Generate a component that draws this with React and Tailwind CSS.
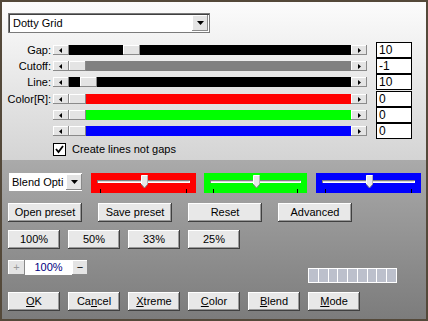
import React from "react";

const font = { fontFamily: '"Liberation Sans", Arial, sans-serif' };

function Tri({ dir }) {
  return (
    <svg width="4" height="5" viewBox="0 0 4 5" className="block">
      {dir === "left" ? <polygon points="3,0 3,5 0,2.5" fill="#000" /> : <polygon points="1,0 1,5 4,2.5" fill="#000" />}
    </svg>
  );
}

function SmallBtn({ children, className = "" }) {
  return (
    <div className={"flex items-center justify-center bg-[#e4e4e4] shadow-[inset_-1px_-1px_#8a8a8a,inset_1px_1px_#ffffff] " + className}>
      {children}
    </div>
  );
}

function ScrollBar({ trackClass, thumb }) {
  return (
    <div className="flex h-[10px] w-[314px]">
      <SmallBtn className="w-[16px] h-full"><Tri dir="left" /></SmallBtn>
      <div className={"relative flex-1 " + trackClass}>
        <div className="absolute top-0 h-full w-[17px] bg-[#e4e4e4] shadow-[inset_-1px_-1px_#8a8a8a,inset_1px_1px_#ffffff]" style={{ left: thumb }} />
      </div>
      <SmallBtn className="w-[16px] h-full"><Tri dir="right" /></SmallBtn>
    </div>
  );
}

function Row({ label, trackClass, thumb, value, extra = "" }) {
  return (
    <div className={"flex h-[16px] items-center " + extra}>
      <div className="w-[49px] text-right text-[11px] leading-none text-black">{label}</div>
      <div className="ml-[2px]">
        <ScrollBar trackClass={trackClass} thumb={thumb} />
      </div>
      <div className="ml-[9px] flex h-[16px] w-[36px] items-center border border-black bg-white pl-[2px] text-[12px] leading-none text-black">
        {value}
      </div>
    </div>
  );
}

function Btn({ children, w = "w-[52px]" }) {
  return (
    <div className={"flex h-[19px] items-center justify-center bg-[#e8e8e8] text-[11px] leading-none text-black shadow-[inset_-1px_-1px_#404040,inset_1px_1px_#ffffff,inset_-2px_-2px_#9a9a9a] " + w}>
      {children}
    </div>
  );
}

function ColorSlider({ bg, w }) {
  return (
    <div className={"relative h-[20px] " + bg + " " + w}>
      <div className="absolute left-[6px] right-[6px] top-[7px] h-[3px] bg-[#d8d8d8] shadow-[inset_1px_1px_#808080,inset_-1px_-1px_#ffffff]" />
      <div className="absolute left-1/2 top-[2px] -ml-[3px] w-[7px]">
        <svg width="7" height="13" viewBox="0 0 7 13" className="block">
          <polygon points="0,0 7,0 7,9 3.5,13 0,9" fill="#e8e8e8" stroke="#808080" strokeWidth="1" />
          <polyline points="0.5,9 0.5,0.5 6.5,0.5" fill="none" stroke="#ffffff" strokeWidth="1" />
        </svg>
      </div>
      <div className="absolute left-[9px] bottom-0 h-[4px] w-px bg-black" />
      <div className="absolute right-[9px] bottom-0 h-[4px] w-px bg-black" />
    </div>
  );
}

export default function App() {
  return (
    <div style={font} className="h-[321px] w-[428px] overflow-hidden border-2 border-[#54493a] select-none">
      {/* top panel */}
      <div className="flex h-[158px] flex-col bg-gradient-to-b from-[#fcfcfc] to-[#d4d4d4]">
        <div className="ml-[6px] mt-[11px] flex h-[20px] w-[202px] items-center border border-[#7a7a7a] bg-white shadow-[inset_1px_1px_#404040]">
          <div className="flex-1 pl-[4px] text-[11px] leading-none text-black">Dotty Grid</div>
          <SmallBtn className="mr-[1px] h-[16px] w-[16px]">
            <svg width="7" height="4" viewBox="0 0 7 4"><polygon points="0,0 7,0 3.5,4" fill="#000" /></svg>
          </SmallBtn>
        </div>
        <div className="mt-[9px] flex flex-col">
          <Row label="Gap:" trackClass="bg-black" thumb={54} value="10" />
          <Row label="Cutoff:" trackClass="bg-[#808080]" thumb={0} value="-1" />
          <Row label="Line:" trackClass="bg-black" thumb={11} value="10" />
          <Row label="Color[R]:" trackClass="bg-[#ff0000]" thumb={0} value="0" extra="mt-px" />
          <Row label="" trackClass="bg-[#00ff00]" thumb={0} value="0" />
          <Row label="" trackClass="bg-[#0000ff]" thumb={0} value="0" />
        </div>
        <div className="ml-[51px] mt-[4px] flex items-center">
          <div className="flex h-[13px] w-[13px] items-center justify-center border border-black bg-white">
            <svg width="9" height="9" viewBox="0 0 9 9"><polyline points="1,4 3.5,7 8,1" fill="none" stroke="#000" strokeWidth="1.8" /></svg>
          </div>
          <span className="ml-[6px] text-[11px] leading-none text-black">Create lines not gaps</span>
        </div>
      </div>
      {/* bottom panel */}
      <div className="flex h-[159px] flex-col bg-gradient-to-b from-[#aaaaaa] to-[#7c7c7c] pl-[6px]">
        <div className="mt-[13px] flex items-start">
          <div className="ml-[1px] flex h-[18px] w-[73px] items-center bg-white">
            <div className="flex-1 overflow-hidden whitespace-nowrap pl-[3px] text-[11px] leading-none text-black">Blend Opti</div>
            <SmallBtn className="h-[16px] w-[16px]">
              <svg width="7" height="4" viewBox="0 0 7 4"><polygon points="0,0 7,0 3.5,4" fill="#000" /></svg>
            </SmallBtn>
          </div>
          <div className="ml-[9px]"><ColorSlider bg="bg-[#ff0000]" w="w-[105px]" /></div>
          <div className="ml-[8px]"><ColorSlider bg="bg-[#00ff00]" w="w-[103px]" /></div>
          <div className="ml-[9px]"><ColorSlider bg="bg-[#0000ff]" w="w-[105px]" /></div>
        </div>
        <div className="mt-[10px] flex gap-[16px]">
          <Btn w="w-[74px]">Open preset</Btn>
          <Btn w="w-[74px]">Save preset</Btn>
          <Btn w="w-[74px]">Reset</Btn>
          <Btn w="w-[74px]">Advanced</Btn>
        </div>
        <div className="mt-[8px] flex gap-[8px]">
          <Btn>100%</Btn>
          <Btn>50%</Btn>
          <Btn>33%</Btn>
          <Btn>25%</Btn>
        </div>
        <div className="mt-[11px] flex items-start">
          <SmallBtn className="h-[15px] w-[17px] bg-[#d4d4d4]">
            <span className="text-[11px] leading-none text-[#9a9a9a]">+</span>
          </SmallBtn>
          <div className="flex h-[15px] w-[47px] items-center justify-center bg-white text-[11px] leading-none text-[#000080]">100%</div>
          <SmallBtn className="h-[15px] w-[16px]">
            <span className="text-[11px] leading-none text-black">−</span>
          </SmallBtn>
          <div className="ml-[220px] mt-[8px] flex h-[15px] w-[89px] gap-px border border-white bg-white">
            {[0, 1, 2, 3, 4, 5, 6, 7, 8].map((i) => (
              <div key={i} className="flex-1 bg-[#bcc0cc]" />
            ))}
          </div>
        </div>
        <div className="mt-[9px] flex gap-[8px]">
          <Btn><span className="underline">O</span>K</Btn>
          <Btn>Ca<span className="underline">n</span>cel</Btn>
          <Btn><span className="underline">X</span>treme</Btn>
          <Btn><span className="underline">C</span>olor</Btn>
          <Btn><span className="underline">B</span>lend</Btn>
          <Btn><span className="underline">M</span>ode</Btn>
        </div>
      </div>
    </div>
  );
}
